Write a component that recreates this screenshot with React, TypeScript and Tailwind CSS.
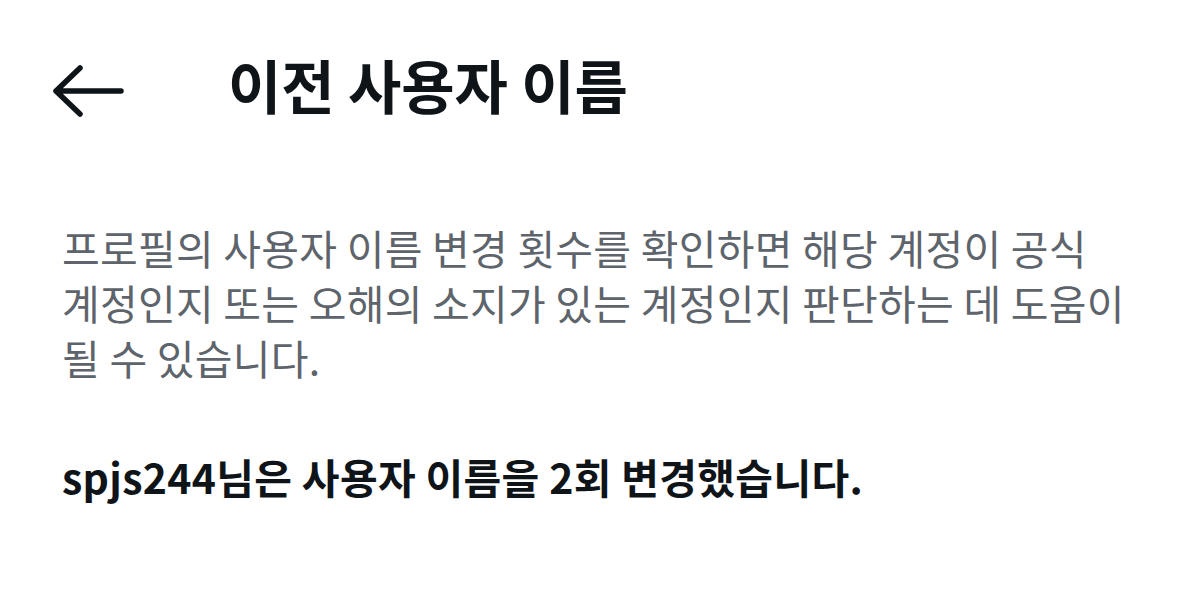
const lines = [
  '프로필의 사용자 이름 변경 횟수를 확인하면 해당 계정이 공식',
  '계정인지 또는 오해의 소지가 있는 계정인지 판단하는 데 도움이',
  '될 수 있습니다.',
]

export default function App() {
  return (
    <div className="w-[1200px] h-[606px] bg-white text-[#0f1419] font-['Noto_Sans_CJK_KR','Noto_Sans',sans-serif]">
      <header className="flex items-center h-[180px]">
        <button className="w-[228px] h-full flex items-center pl-[51px] pt-[2px]" aria-label="뒤로">
          <svg width="74" height="54" viewBox="0 0 74 54" fill="none">
            <path
              d="M70 27H5M29 4L5 27l24 23"
              stroke="#0f1419"
              strokeWidth="5.5"
              strokeLinecap="round"
              strokeLinejoin="round"
            />
          </svg>
        </button>
        <h1 className="text-[58px] font-bold leading-none -mt-[12px]">이전 사용자 이름</h1>
      </header>
      <section className="px-[62px] pt-[40px]">
        <p className="text-[41px] leading-[55px] tracking-[0.25px] text-[#5e646b]">
          {lines.map((l) => (
            <span key={l} className="block whitespace-nowrap">
              {l}
            </span>
          ))}
        </p>
        <p className="mt-[64px] text-[41px] font-bold leading-[55px] tracking-[0.3px] whitespace-nowrap">
          spjs244님은 사용자 이름을 2회 변경했습니다.
        </p>
      </section>
    </div>
  )
}
